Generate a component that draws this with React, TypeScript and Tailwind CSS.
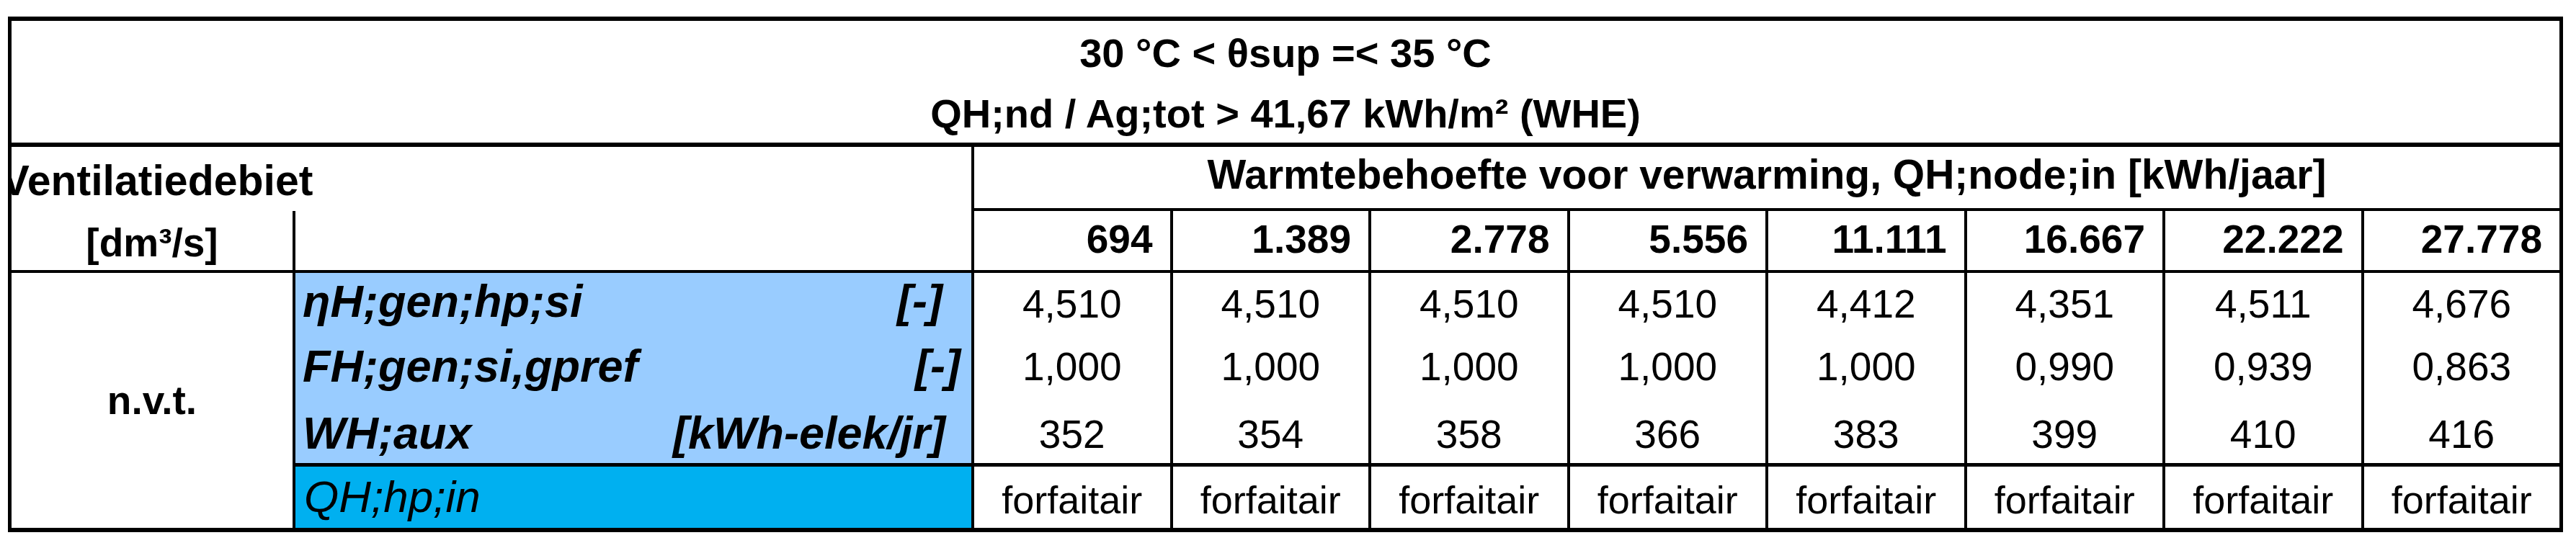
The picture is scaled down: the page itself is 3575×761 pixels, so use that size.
import React from "react";

const heads = ["694", "1.389", "2.778", "5.556", "11.111", "16.667", "22.222", "27.778"];
const r1 = ["4,510", "4,510", "4,510", "4,510", "4,412", "4,351", "4,511", "4,676"];
const r2 = ["1,000", "1,000", "1,000", "1,000", "1,000", "0,990", "0,939", "0,863"];
const r3 = ["352", "354", "358", "366", "383", "399", "410", "416"];

const dataRows = [
  { vals: r1, pt: "pt-[16px]" },
  { vals: r2, pt: "pt-[15px]" },
  { vals: r3, pt: "pt-[21px]" },
];

const labels = [
  { name: "ηH;gen;hp;si", unit: "[-]", pt: "pt-[8px]", pr: "pr-[40px]" },
  { name: "FH;gen;si,gpref", unit: "[-]", pt: "pt-[10px]", pr: "pr-[15px]" },
  { name: "WH;aux", unit: "[kWh-elek/jr]", pt: "pt-[15px]", pr: "pr-[36px]" },
];

export default function App() {
  return (
    <div className="w-[3575px] h-[761px] bg-white pl-[11px] pt-[23px] text-black font-['Liberation_Sans',Arial,sans-serif]">
      <div className="w-[3546px] border-x-[5px] border-t-[6px] border-b-[6px] border-black overflow-hidden">
        {/* Title rows */}
        <div className="h-[84px] flex justify-center items-start pt-[17px] text-[56px] font-bold leading-none whitespace-nowrap">
          30 °C &lt; θsup =&lt; 35 °C
        </div>
        <div className="h-[91px] border-b-[6px] border-black flex justify-center items-start pt-[17px] text-[56px] font-bold leading-none whitespace-nowrap">
          QH;nd / Ag;tot &gt; 41,67 kWh/m² (WHE)
        </div>

        {/* Header rows */}
        <div className="flex h-[175px] border-b-4 border-black">
          <div className="w-[1332px] shrink-0 flex flex-col">
            <div className="h-[89px] flex">
              <div className="w-[390px] shrink-0 flex justify-center items-start pt-[18px] text-[59px] font-bold leading-none whitespace-nowrap">
                <span className="ml-[14px]">Ventilatiedebiet</span>
              </div>
            </div>
            <div className="h-[82px] flex">
              <div className="w-[390px] shrink-0 flex justify-center items-start pt-[17px] text-[55px] font-bold leading-none whitespace-nowrap">
                [dm³/s]
              </div>
              <div className="flex-1 border-l-4 border-black" />
            </div>
          </div>
          <div className="w-[2204px] shrink-0 flex flex-col">
            <div className="h-[89px] border-l-4 border-b-4 border-black flex justify-center items-start pt-[10px] text-[57px] font-bold leading-none whitespace-nowrap">
              Warmtebehoefte voor verwarming, QH;node;in [kWh/jaar]
            </div>
            <div className="h-[82px] grid grid-cols-8">
              {heads.map((h, i) => (
                <div
                  key={i}
                  className="border-l-4 border-black flex justify-end items-start pt-[12px] pr-[24px] text-[55px] font-bold leading-none"
                >
                  {h}
                </div>
              ))}
            </div>
          </div>
        </div>

        {/* Data rows */}
        <div className="flex h-[354px]">
          <div className="w-[390px] shrink-0 flex items-center justify-center text-[55px] font-bold leading-none">
            n.v.t.
          </div>
          <div className="w-[942px] shrink-0 border-l-4 border-black flex flex-col">
            {labels.map((l, i) => (
              <div
                key={i}
                className={`h-[88px] bg-[#99ccff] flex justify-between items-start pl-[10px] ${l.pr} ${l.pt} text-[63px] font-bold italic leading-none whitespace-nowrap`}
              >
                <span>{l.name}</span>
                <span>{l.unit}</span>
              </div>
            ))}
            <div className="h-[90px] border-t-[5px] border-black bg-[#00b0f0] flex items-start pl-[12px] pt-[11px] text-[62px] italic leading-none whitespace-nowrap">
              QH;hp;in
            </div>
          </div>
          <div className="w-[2204px] shrink-0 flex flex-col">
            {dataRows.map((r, ri) => (
              <div key={ri} className="h-[88px] grid grid-cols-8">
                {r.vals.map((v, i) => (
                  <div
                    key={i}
                    className={`border-l-4 border-black flex justify-center items-start ${r.pt} text-[55px] leading-none`}
                  >
                    {v}
                  </div>
                ))}
              </div>
            ))}
            <div className="h-[90px] border-t-[5px] border-black grid grid-cols-8">
              {heads.map((_, i) => (
                <div
                  key={i}
                  className="border-l-4 border-black flex justify-center items-start pt-[19px] text-[54px] leading-none"
                >
                  forfaitair
                </div>
              ))}
            </div>
          </div>
        </div>
      </div>
    </div>
  );
}
